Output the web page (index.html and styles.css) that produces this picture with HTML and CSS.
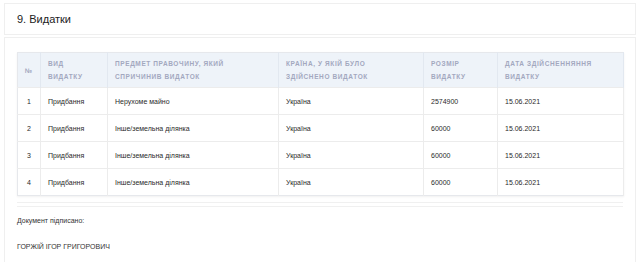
FILE: index.html
```html
<!DOCTYPE html>
<html lang="uk">
<head>
<meta charset="utf-8">
<link rel="stylesheet" href="styles.css">
</head>
<body>
<div class="page">
  <div class="card-head"><h2 class="title">9. Видатки</h2></div>
  <div class="card-body">
    <table class="tbl">
      <colgroup>
        <col class="c1"><col class="c2"><col class="c3"><col class="c4"><col class="c5"><col class="c6">
      </colgroup>
      <thead>
        <tr>
          <th>№</th>
          <th>Вид<br>видатку</th>
          <th>Предмет правочину, який<br>спричинив видаток</th>
          <th>Країна, у якій було<br>здійснено видаток</th>
          <th>Розмір<br>видатку</th>
          <th>Дата здійсненняння<br>видатку</th>
        </tr>
      </thead>
      <tbody>
        <tr><td>1</td><td>Придбання</td><td>Нерухоме майно</td><td>Україна</td><td>2574900</td><td>15.06.2021</td></tr>
        <tr><td>2</td><td>Придбання</td><td>Інше/земельна ділянка</td><td>Україна</td><td>60000</td><td>15.06.2021</td></tr>
        <tr><td>3</td><td>Придбання</td><td>Інше/земельна ділянка</td><td>Україна</td><td>60000</td><td>15.06.2021</td></tr>
        <tr><td>4</td><td>Придбання</td><td>Інше/земельна ділянка</td><td>Україна</td><td>60000</td><td>15.06.2021</td></tr>
      </tbody>
    </table>
    <div class="sep"></div>
    <p class="note">Документ підписано:</p>
    <p class="signer">ГОРЖІЙ ІГОР ГРИГОРОВИЧ</p>
  </div>
</div>
</body>
</html>
```
FILE: styles.css
```css
html, body {
  margin: 0;
  padding: 0;
  background: #fff;
  font-family: "Liberation Sans", Arial, sans-serif;
  color: #333;
}
.page {
  padding: 3px 4px 0 4px;
}
.card-head {
  border: 1px solid #efefef;
  height: 30px;
  display: flex;
  align-items: center;
  padding: 0 12px;
}
.title {
  margin: 0;
  font-size: 11px;
  font-weight: normal;
  color: #222;
}
.card-body {
  border: 1px solid #efefef;
  border-bottom: none;
  margin-top: 2px;
  padding: 14px 12px 20px 12px;
}
.tbl {
  width: 606px;
  border-collapse: collapse;
  table-layout: fixed;
  border: 1px solid #e6e8ec;
  box-shadow: 0 1px 2px rgba(0,0,0,0.06);
}
.c1 { width: 23px; }
.c2 { width: 67px; }
.c3 { width: 171px; }
.c4 { width: 145px; }
.c5 { width: 74px; }
.c6 { width: 126px; }
.tbl th {
  background: #eef3f9;
  color: #a3a8bf;
  font-size: 6.5px;
  font-weight: bold;
  text-transform: uppercase;
  letter-spacing: 0.6px;
  text-align: left;
  line-height: 13px;
  padding: 4px 7px;
  height: 26px;
  border-right: 1px solid #e2e8f0;
  vertical-align: middle;
}
.tbl th:first-child {
  text-align: center;
  padding: 4px 2px;
}
.tbl td {
  font-size: 7px;
  color: #2a2a2a;
  height: 26px;
  padding: 0 7px;
  border-top: 1px solid #ececec;
  border-right: 1px solid #ececec;
  vertical-align: middle;
  white-space: nowrap;
}
.tbl td:first-child {
  text-align: center;
  padding: 0 2px;
}
.sep {
  margin-top: 6px;
  height: 3px;
  border-top: 1px solid #f0f0f0;
  border-bottom: 1px solid #f0f0f0;
}
.note {
  margin: 9px 0 0 0;
  font-size: 7px;
  line-height: 9px;
}
.signer {
  margin: 17px 0 0 0;
  font-size: 7px;
  line-height: 9px;
}
```
